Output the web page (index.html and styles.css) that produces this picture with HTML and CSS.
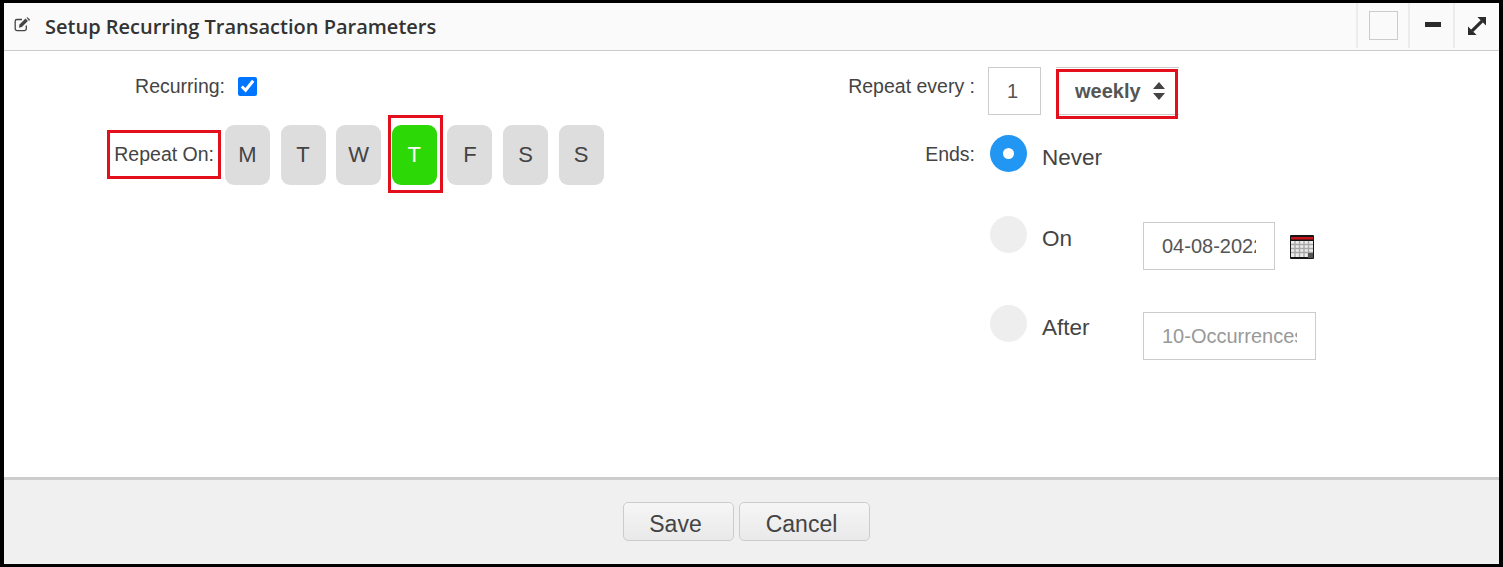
FILE: index.html
```html
<!DOCTYPE html>
<html lang="en">
<head>
    <meta charset="UTF-8">
    <meta name="viewport" content="width=device-width, initial-scale=1.0">
    <title>Setup Recurring Transaction Parameters</title>
    <link rel="stylesheet" href="styles.css">
</head>
<body>
    <div class="window">
        <!-- Title bar -->
        <header class="titlebar">
            <svg class="title-icon" width="17" height="15" viewBox="0 0 17 15" fill="none">
                <path d="M8 2.5H3A1.8 1.8 0 0 0 1.2 4.3v7.5A1.8 1.8 0 0 0 3 13.6h7.5a1.8 1.8 0 0 0 1.8-1.8V8.5" stroke="#444" stroke-width="1.3"/>
                <path d="M5.5 7.6l6-6 2.4 2.4-6 6-3 .7z" fill="#444"/>
                <path d="M12.5.6l1-.4 2.6 2.6-1.1 1.2z" fill="#444"/>
            </svg>
            <h1>Setup Recurring Transaction Parameters</h1>
            <div class="title-actions">
                <div class="title-btn btn-square"><span class="square"></span></div>
                <div class="title-btn btn-min"><span class="minus"></span></div>
                <div class="title-btn btn-expand">
                    <svg width="18" height="18" viewBox="0 0 20 20">
                        <path d="M4.500 15.500l11-11" stroke="#2b2b2b" stroke-width="3.600"/>
                        <path d="M10.500 0h9.500v9.500z" fill="#2b2b2b"/>
                        <path d="M0 20v-9.500l9.500 9.500z" fill="#2b2b2b"/>
                    </svg>
                </div>
            </div>
        </header>

        <!-- Form -->
        <main class="content">
            <section class="col-left">
                <div class="row-recurring">
                    <label class="field-label">Recurring:</label>
                    <input type="checkbox" class="check" checked>
                </div>
                <div class="row-days">
                    <div class="field-label repeat-label"><span class="marked-label">Repeat On:</span></div>
                    <div class="days">
                        <div class="day">M</div>
                        <div class="day">T</div>
                        <div class="day">W</div>
                        <div class="day day-on">T</div>
                        <div class="day">F</div>
                        <div class="day">S</div>
                        <div class="day">S</div>
                    </div>
                </div>
            </section>

            <section class="col-right">
                <div class="row-every">
                    <label class="field-label">Repeat every :</label>
                    <input type="text" class="box box-count" value="1">
                    <div class="select-wrap">
                        <select class="period"><option>weekly</option></select>
                        <svg class="select-arrows" width="12" height="18" viewBox="0 0 12 18">
                            <path d="M6 0l6 7H0zM0 11h12l-6 7z" fill="#444"/>
                        </svg>
                    </div>
                </div>
                <div class="row-ends">
                    <label class="field-label ends-label">Ends:</label>
                    <div class="ends">
                        <div class="end-row end-never">
                            <span class="radio radio-on"></span>
                            <span class="end-name">Never</span>
                        </div>
                        <div class="end-row end-on">
                            <span class="radio"></span>
                            <span class="end-name">On</span>
                            <input type="text" class="box box-date" value="04-08-2022">
                            <svg class="calendar" width="24" height="24" viewBox="0 0 24 24">
                                <rect width="24" height="24" rx="1" fill="#161616"/>
                                <rect x="1" y="2" width="22" height="2.500" fill="#c8141c"/>
                                <rect x="1" y="6" width="22" height="16" fill="#ececec"/>
                                <path d="M1 9.500h22M1 13.500h22M1 17.500h22M5 6v16M9.500 6v16M14 6v16M18.500 6v16" stroke="#a8a8a8" stroke-width="1.400"/>
                                <rect x="18" y="18" width="5" height="5" fill="#555"/>
                            </svg>
                        </div>
                        <div class="end-row end-after">
                            <span class="radio"></span>
                            <span class="end-name">After</span>
                            <input type="text" class="box box-after" placeholder="10-Occurrences">
                        </div>
                    </div>
                </div>
            </section>
        </main>

        <!-- Footer -->
        <footer class="footer">
            <button class="btn btn-save">Save</button>
            <button class="btn btn-cancel">Cancel</button>
        </footer>
    </div>
</body>
</html>
```

FILE: styles.css
```css
* {
    box-sizing: border-box;
}

body {
    font-family: "Liberation Sans", Arial, sans-serif;
    margin: 0;
    padding: 0;
    background-color: #fff;
    color: #444;
}

.window {
    height: 567px;
    display: flex;
    flex-direction: column;
    border-style: solid;
    border-color: #000;
    border-width: 3px 4px 3px 4px;
}

/* Title bar */
.titlebar {
    height: 48px;
    display: flex;
    align-items: center;
    flex-shrink: 0;
    padding-left: 10px;
    background-color: #fafafa;
    border-bottom: 1px solid #ccc;
}

.title-icon {
    margin-top: -4px;
    margin-right: 14px;
}

.titlebar h1 {
    margin: 0;
    font-family: "Open Sans", Verdana, sans-serif;
    font-size: 20px;
    font-weight: 600;
    color: #333;
}

.title-actions {
    margin-left: auto;
    display: flex;
    align-self: stretch;
}

.title-btn {
    display: flex;
    align-items: center;
    justify-content: center;
    border-left: 2px solid #ececec;
    margin-bottom: 2px;
}

.btn-square {
    width: 52px;
}

.btn-min {
    width: 45px;
}

.btn-expand {
    width: 46px;
}

.square {
    display: block;
    width: 29px;
    height: 29px;
    border: 1px solid #ccc;
}

.minus {
    display: block;
    width: 16px;
    height: 5px;
    margin-top: -3px;
    margin-left: 2px;
    background-color: #2b2b2b;
}

/* Form */
.content {
    flex: 1;
    display: flex;
    padding-top: 16px;
}

.field-label {
    font-size: 19.5px;
    text-align: right;
    color: #444;
}

.col-left {
    width: 700px;
}

.row-recurring {
    display: flex;
    align-items: center;
    height: 38px;
}

.row-recurring .field-label {
    width: 221px;
}

.check {
    width: 19px;
    height: 19px;
    margin: 0 0 0 13px;
    accent-color: #0075ff;
}

.row-days {
    display: flex;
    align-items: center;
    margin-top: 20px;
}

.repeat-label {
    width: 221px;
    display: flex;
    justify-content: flex-end;
    margin-top: -1px;
}

.marked-label {
    position: relative;
    margin-right: 11px;
    white-space: nowrap;
}

.marked-label::after {
    content: "";
    position: absolute;
    top: -13px;
    bottom: -13px;
    left: -7px;
    right: -7px;
    border: 3px solid #e30f1c;
}

.days {
    display: flex;
    gap: 10.6px;
}

.day {
    position: relative;
    width: 45px;
    height: 60px;
    display: flex;
    align-items: center;
    justify-content: center;
    font-size: 22px;
    color: #444;
    background-color: #ddd;
    border-radius: 9px;
}

.day-on {
    color: #fff;
    background-color: #2cd906;
}

.day-on::after {
    content: "";
    position: absolute;
    top: -10px;
    bottom: -8px;
    left: -4px;
    right: -6px;
    border: 3px solid #e30f1c;
}

.col-right {
    flex: 1;
}

.row-every {
    display: flex;
    align-items: flex-start;
}

.row-every .field-label {
    width: 271px;
    padding-top: 8px;
}

.box {
    height: 48px;
    padding: 0 18px;
    font-family: inherit;
    font-size: 20px;
    color: #555;
    background-color: #fff;
    border: 1px solid #ccc;
    border-radius: 0;
    outline: none;
}

.box::placeholder {
    color: #999;
}

.box-count {
    width: 53px;
    margin-left: 13px;
}

.select-wrap {
    position: relative;
    width: 123px;
    height: 48px;
    margin-left: 15px;
}

.period {
    width: 100%;
    height: 100%;
    padding: 0 0 0 19px;
    appearance: none;
    font-family: inherit;
    font-size: 20px;
    font-weight: bold;
    color: #555;
    background-color: #fff;
    border: none;
    border-top: 1px solid #ccc;
    border-bottom: 1px solid #ccc;
    border-radius: 0;
}

.select-arrows {
    position: absolute;
    top: 15px;
    left: 97px;
}

.select-wrap::after {
    content: "";
    position: absolute;
    top: 2px;
    bottom: -4px;
    left: 0;
    right: 1px;
    border: 3px solid #e30f1c;
    pointer-events: none;
}

.row-ends {
    display: flex;
    margin-top: 20px;
}

.ends-label {
    width: 271px;
    padding-top: 8px;
}

.ends {
    margin-left: 15px;
}

.end-row {
    display: flex;
    align-items: flex-start;
}

.end-on {
    margin-top: 44px;
}

.end-after {
    margin-top: 35px;
}

.radio {
    position: relative;
    width: 37px;
    height: 37px;
    border-radius: 50%;
    background-color: #eee;
}

.radio-on {
    background-color: #2196f3;
}

.radio-on::after {
    content: "";
    position: absolute;
    top: 13px;
    left: 13px;
    width: 11px;
    height: 11px;
    border-radius: 50%;
    background-color: #fff;
}

.end-name {
    width: 116px;
    margin-left: 15px;
    padding-top: 10px;
    font-size: 22.5px;
    color: #444;
}

.end-on .box {
    margin-top: 6px;
}

.end-after .box {
    margin-top: 7px;
}

.box-date {
    width: 132px;
    margin-left: -15px;
    margin-right: 15px;
}

.box-after {
    width: 173px;
    margin-left: -15px;
}

.calendar {
    margin-top: 19px;
}

/* Footer */
.footer {
    height: 87px;
    flex-shrink: 0;
    display: flex;
    justify-content: center;
    gap: 5px;
    padding-top: 22px;
    padding-right: 10px;
    background-color: #f0f0f0;
    border-top: 3px solid #ccc;
}

.btn {
    height: 39px;
    padding: 6px 6px 0 0;
    font-family: inherit;
    font-size: 23px;
    color: #444;
    background: linear-gradient(#f6f6f6, #e9e9e9);
    border: 1px solid #ccc;
    border-radius: 5px;
    cursor: pointer;
}

.btn-save {
    width: 111px;
}

.btn-cancel {
    width: 131px;
}
```
